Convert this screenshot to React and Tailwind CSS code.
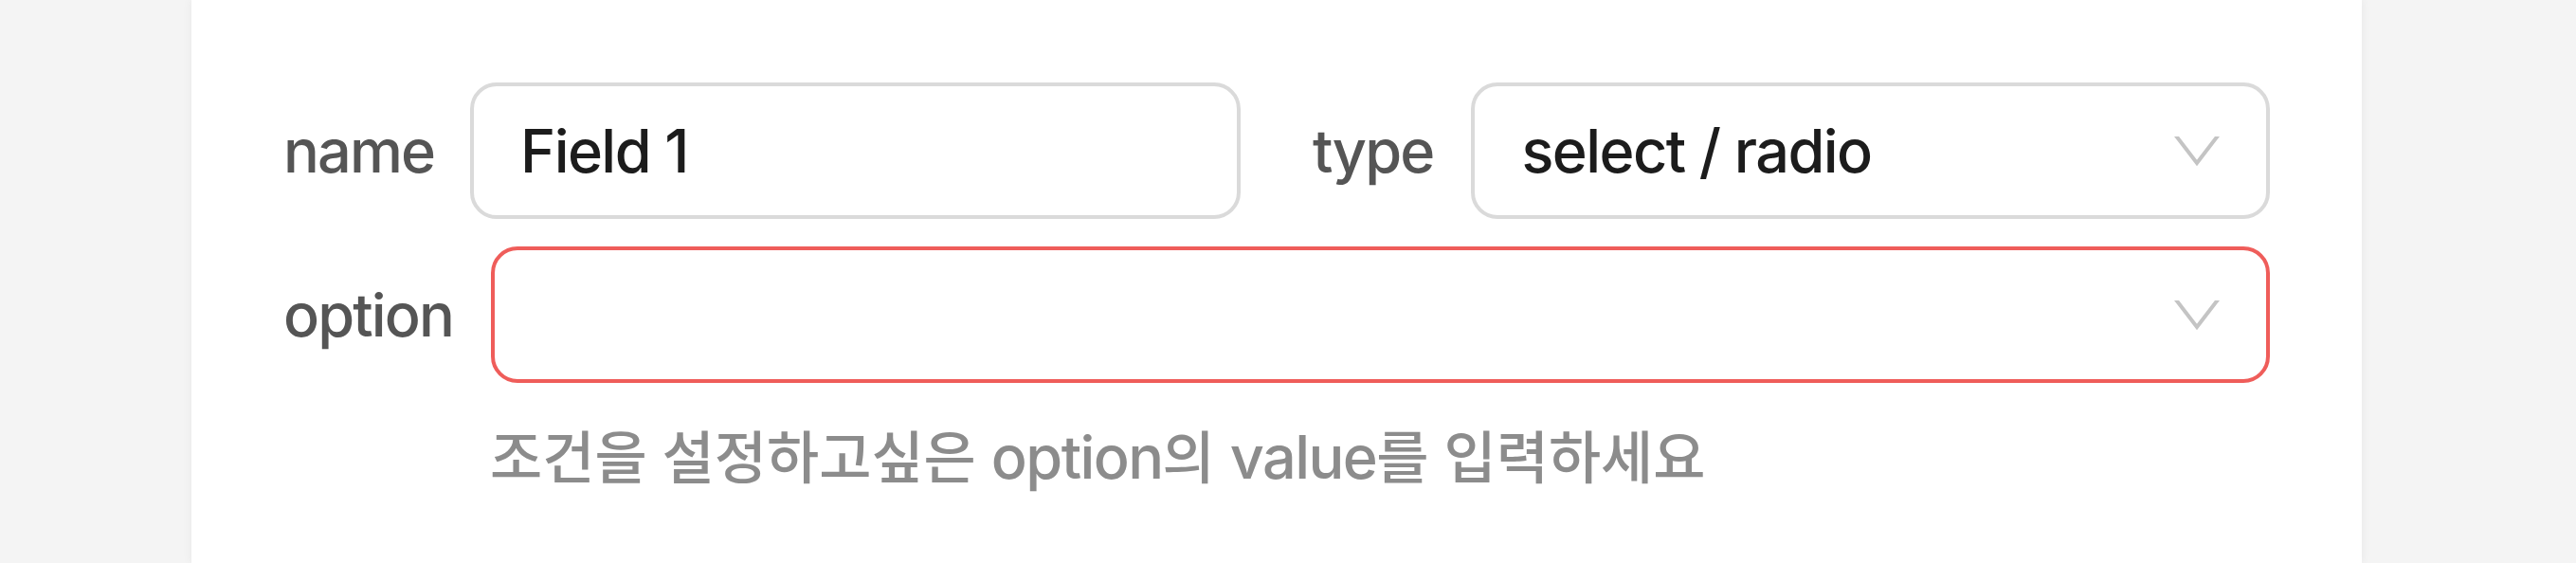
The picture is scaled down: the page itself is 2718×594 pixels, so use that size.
const FONT = { fontFamily: 'Inter, "Noto Sans CJK KR", sans-serif' }

function Chevron() {
  return (
    <svg viewBox="0 0 48 31" className="h-[31px] w-[48px] shrink-0 overflow-hidden">
      <polyline points="1,-2 24,28 47,-2" fill="none" stroke="#c4c4c4" strokeWidth="4" />
    </svg>
  )
}

function Label({ children }) {
  return (
    <span className="shrink-0 whitespace-nowrap text-[63px] font-[450] leading-[1.25] tracking-[-0.03em] text-[#555555]">
      {children}
    </span>
  )
}

function Field({ value, select, error }) {
  return (
    <div
      className={
        'flex h-[144px] min-w-0 flex-1 items-center rounded-[28px] border-4 bg-white pl-[49px] pr-[49px] ' +
        (error ? 'border-[#ef5d5a]' : 'border-[#dadada]')
      }
    >
      <span className="flex-1 whitespace-nowrap text-[63px] font-[450] leading-[1.25] tracking-[-0.025em] text-[#1c1c1c]">
        {value}
      </span>
      {select && <Chevron />}
    </div>
  )
}

export default function App() {
  return (
    <div className="flex h-[594px] w-full overflow-hidden bg-[#f4f4f4]" style={FONT}>
      <div className="ml-[202px] w-[2290px] bg-white px-[97px] pt-[87px] shadow-[0_0_10px_rgba(0,0,0,0.06)]">
        {/* name + type */}
        <div className="flex gap-[76px]">
          <div className="flex flex-1 items-center gap-[38px]">
            <Label>name</Label>
            <Field value="Field 1" />
          </div>
          <div className="flex flex-1 items-center gap-[40px]">
            <Label>type</Label>
            <Field value="select / radio" select />
          </div>
        </div>

        {/* option */}
        <div className="mt-[29px] flex items-center gap-[40px]">
          <Label>option</Label>
          <Field value="" select error />
        </div>

        <p className="mt-[43px] whitespace-nowrap pl-[218px] text-[60px] font-[450] leading-[70px] text-[#8c8c8c]">
          조건을 설정하고싶은 <span className="text-[63px] tracking-[-0.025em]">option</span>의{' '}
          <span className="text-[63px] tracking-[-0.025em]">value</span>를 입력하세요
        </p>
      </div>
    </div>
  )
}
